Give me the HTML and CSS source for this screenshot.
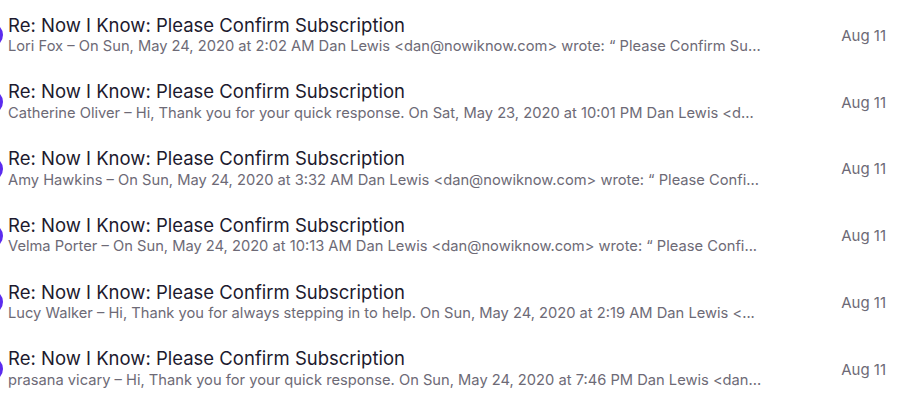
FILE: index.html
```
<!DOCTYPE html>
<html>
<head>
<meta charset="utf-8">
<link rel="stylesheet" href="styles.css">
</head>
<body>
<ul class="list">
  <li class="row">
    <span class="dot"></span>
    <div class="text">
      <div class="subject">Re: Now I Know: Please Confirm Subscription</div>
      <div class="preview">Lori Fox – On Sun, May 24, 2020 at 2:02 AM Dan Lewis &lt;dan@nowiknow.com&gt; wrote: “ Please Confirm Su...</div>
    </div>
    <div class="date">Aug 11</div>
  </li>
  <li class="row">
    <span class="dot"></span>
    <div class="text">
      <div class="subject">Re: Now I Know: Please Confirm Subscription</div>
      <div class="preview">Catherine Oliver – Hi, Thank you for your quick response. On Sat, May 23, 2020 at 10:01 PM Dan Lewis &lt;d...</div>
    </div>
    <div class="date">Aug 11</div>
  </li>
  <li class="row">
    <span class="dot"></span>
    <div class="text">
      <div class="subject">Re: Now I Know: Please Confirm Subscription</div>
      <div class="preview">Amy Hawkins – On Sun, May 24, 2020 at 3:32 AM Dan Lewis &lt;dan@nowiknow.com&gt; wrote: “ Please Confi...</div>
    </div>
    <div class="date">Aug 11</div>
  </li>
  <li class="row">
    <span class="dot"></span>
    <div class="text">
      <div class="subject">Re: Now I Know: Please Confirm Subscription</div>
      <div class="preview">Velma Porter – On Sun, May 24, 2020 at 10:13 AM Dan Lewis &lt;dan@nowiknow.com&gt; wrote: “ Please Confi...</div>
    </div>
    <div class="date">Aug 11</div>
  </li>
  <li class="row">
    <span class="dot"></span>
    <div class="text">
      <div class="subject">Re: Now I Know: Please Confirm Subscription</div>
      <div class="preview">Lucy Walker – Hi, Thank you for always stepping in to help. On Sun, May 24, 2020 at 2:19 AM Dan Lewis &lt;...</div>
    </div>
    <div class="date">Aug 11</div>
  </li>
  <li class="row">
    <span class="dot"></span>
    <div class="text">
      <div class="subject">Re: Now I Know: Please Confirm Subscription</div>
      <div class="preview">prasana vicary – Hi, Thank you for your quick response. On Sun, May 24, 2020 at 7:46 PM Dan Lewis &lt;dan...</div>
    </div>
    <div class="date">Aug 11</div>
  </li>
</ul>
</body>
</html>
```
FILE: styles.css
```
html, body {
  margin: 0;
  padding: 0;
  background: #ffffff;
  overflow: hidden;
}
body {
  font-family: Inter, "Liberation Sans", Arial, sans-serif;
}
.list {
  list-style: none;
  margin: 0;
  padding: 2px 0 0 0;
}
.row {
  position: relative;
  height: 66.75px;
  display: flex;
  align-items: center;
  padding: 0 18px 0 8px;
  box-sizing: border-box;
}
.dot {
  position: absolute;
  left: -21px;
  top: 50%;
  width: 24px;
  height: 24px;
  margin-top: -12px;
  border-radius: 50%;
  background: #5b2bef;
}
.text {
  width: 770px;
  min-width: 0;
  display: flex;
  flex-direction: column;
  padding-bottom: 2px;
}
.subject {
  font-size: 18.5px;
  line-height: 22px;
  color: #1d1a2e;
  white-space: nowrap;
}
.preview {
  margin-top: 1.5px;
  font-size: 14.7px;
  line-height: 18px;
  color: #6d6a76;
  white-space: nowrap;
}
.date {
  margin-left: auto;
  font-size: 15px;
  color: #6d6a76;
  white-space: nowrap;
}
```
